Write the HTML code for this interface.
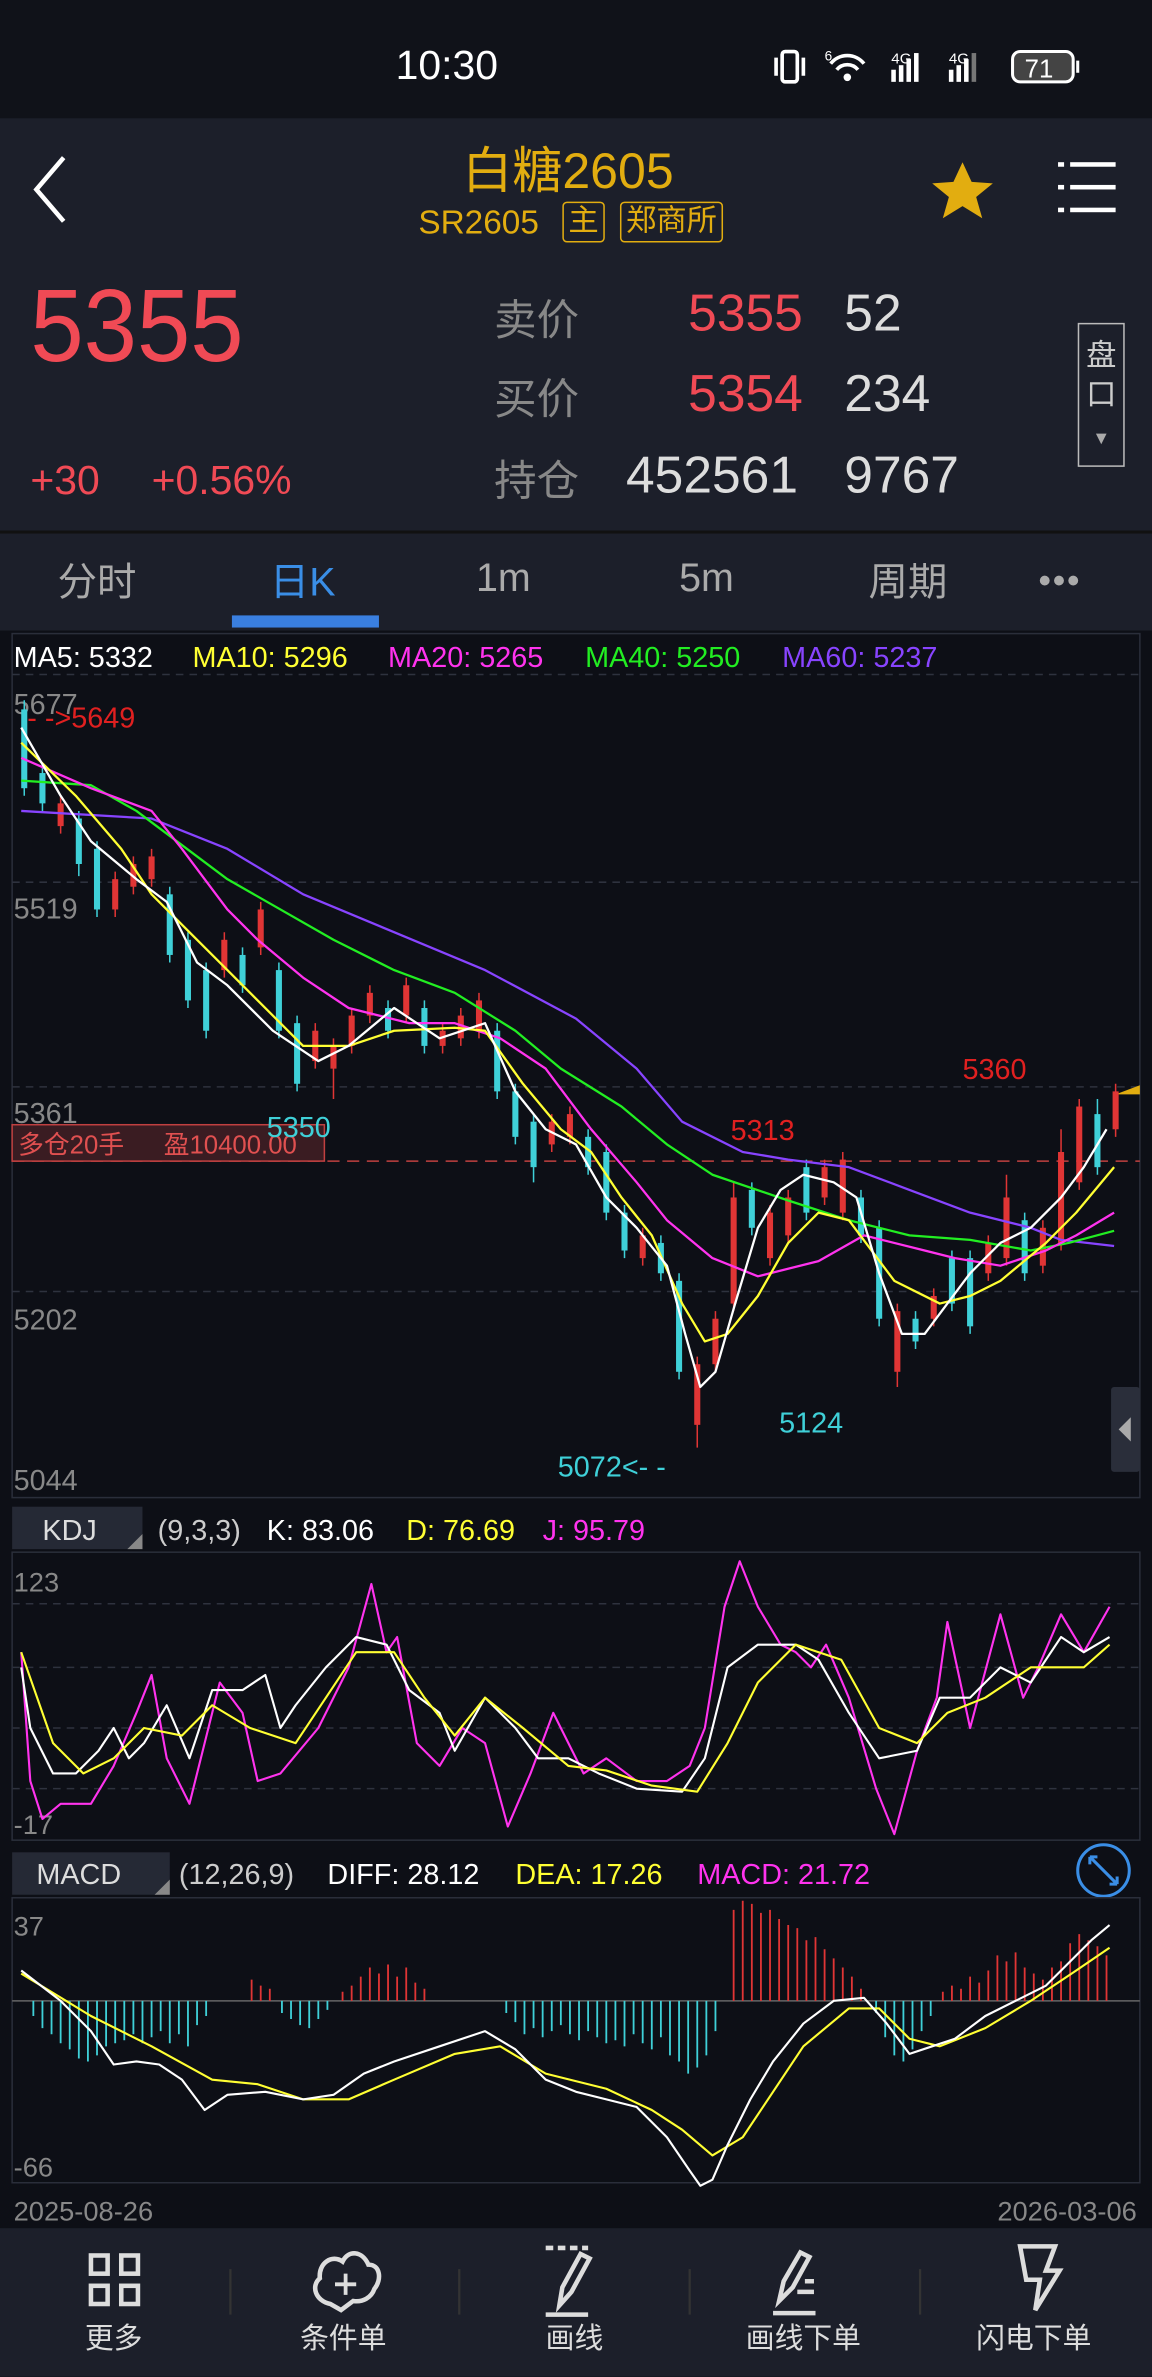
<!DOCTYPE html>
<html><head><meta charset="utf-8">
<style>
html,body{margin:0;padding:0;width:1152px;height:2376px;overflow:hidden;background:#0d0f16}
#w{position:absolute;left:0;top:0;width:760px;height:1568px;transform:scale(1.515789);transform-origin:0 0;font-family:"Liberation Sans","Noto Sans CJK SC",sans-serif;background:#0d0f16;overflow:hidden}
.a{position:absolute;white-space:nowrap}
</style></head><body><div id="w">
<!-- status bar -->
<div class="a" style="left:0;top:0;width:760px;height:78px;background:#101219"></div>
<div class="a" style="left:261px;top:28px;font-size:27px;color:#fff">10:30</div>
<svg class="a" style="left:510px;top:30px" width="210" height="30" viewBox="0 0 210 30">
<g fill="none" stroke="#fff" stroke-width="2.4">
<rect x="6" y="4" width="10" height="20" rx="2"/><path d="M2 8v12M20 8v12"/>
<path d="M38 12a14 14 0 0 1 22 0M42 16a9 9 0 0 1 14 0"/>
</g>
<circle cx="49" cy="21" r="2.5" fill="#fff"/>
<text x="34" y="10" font-size="9" fill="#fff">6</text>
<text x="78" y="12" font-size="10" fill="#fff">4G</text>
<g fill="#fff"><rect x="78" y="16" width="3" height="8"/><rect x="83" y="13" width="3" height="11"/><rect x="88" y="9" width="3" height="15"/><rect x="93" y="5" width="3" height="19"/></g>
<text x="116" y="12" font-size="10" fill="#fff">4G</text>
<g fill="#fff"><rect x="116" y="16" width="3" height="8"/><rect x="121" y="13" width="3" height="11"/><rect x="126" y="9" width="3" height="15"/></g><rect x="131" y="5" width="3" height="19" fill="#777"/>
<rect x="158" y="4" width="40" height="20" rx="5" fill="#444" stroke="#fff" stroke-width="2"/>
<rect x="200" y="10" width="2" height="8" fill="#fff"/>
<text x="166" y="21" font-size="17" fill="#fff">71</text>
</svg>
<!-- header -->
<div class="a" style="left:0;top:78px;width:760px;height:272px;background:#1c1f2a"></div>
<svg class="a" style="left:18px;top:100px" width="30" height="50"><path d="M24 4L6 25l18 21" fill="none" stroke="#fff" stroke-width="3"/></svg>
<div class="a" style="left:305px;top:86px;font-size:33px;color:#e2ad10">白糖2605</div>
<div class="a" style="left:276px;top:134px;font-size:22px;color:#e2ad10">SR2605</div>
<div class="a" style="left:371px;top:133px;font-size:20px;color:#e2ad10;border:1.5px solid #e2ad10;border-radius:3px;padding:0 3px;line-height:25px">主</div>
<div class="a" style="left:409px;top:133px;font-size:20px;color:#e2ad10;border:1.5px solid #e2ad10;border-radius:3px;padding:0 3px;line-height:25px">郑商所</div>
<svg class="a" style="left:612px;top:104px" width="46" height="42"><path d="M23 3l6 13 14 1-11 9 4 14-13-8-13 8 4-14-11-9 14-1z" fill="#e2ad10"/></svg>
<svg class="a" style="left:698px;top:104px" width="42" height="40" fill="#fff"><rect x="0" y="3" width="4" height="3"/><rect x="8" y="3" width="30" height="3"/><rect x="0" y="18" width="4" height="3"/><rect x="8" y="18" width="30" height="3"/><rect x="0" y="33" width="4" height="3"/><rect x="8" y="33" width="30" height="3"/></svg>
<div class="a" style="left:20px;top:176px;font-size:68px;color:#f04a55;transform:scaleX(0.93);transform-origin:0 0">5355</div>
<div class="a" style="left:20px;top:302px;font-size:27px;color:#f04a55">+30</div>
<div class="a" style="left:100px;top:302px;font-size:27px;color:#f04a55">+0.56%</div>
<div class="a" style="left:326px;top:190px;font-size:28px;color:#888">卖价</div>
<div class="a" style="left:326px;top:242px;font-size:28px;color:#888">买价</div>
<div class="a" style="left:326px;top:296px;font-size:28px;color:#888">持仓</div>
<div class="a" style="left:454px;top:188px;font-size:34px;color:#f04a55">5355</div>
<div class="a" style="left:557px;top:188px;font-size:34px;color:#ddd">52</div>
<div class="a" style="left:454px;top:241px;font-size:34px;color:#f04a55">5354</div>
<div class="a" style="left:557px;top:241px;font-size:34px;color:#ddd">234</div>
<div class="a" style="left:413px;top:295px;font-size:34px;color:#ddd">452561</div>
<div class="a" style="left:557px;top:295px;font-size:34px;color:#ddd">9767</div>
<div class="a" style="left:711px;top:213px;width:31px;height:95px;border:1.5px solid #bbb;box-sizing:border-box;color:#ccc;font-size:20px;text-align:center;line-height:26px;padding-top:8px">盘<br>口<br><span style="font-size:12px;color:#aaa">▼</span></div>
<!-- tabs -->
<div class="a" style="left:0;top:350px;width:760px;height:64px;background:#1c1f2a;border-top:2px solid #111"></div>
<div class="a" style="left:38px;top:364px;font-size:26px;color:#aaa">分时</div>
<div class="a" style="left:178px;top:364px;font-size:26px;color:#3a8ee6">日K</div>
<div class="a" style="left:153px;top:406px;width:97px;height:8px;background:#3a7fe0"></div>
<div class="a" style="left:314px;top:366px;font-size:26px;color:#aaa">1m</div>
<div class="a" style="left:448px;top:366px;font-size:26px;color:#aaa">5m</div>
<div class="a" style="left:573px;top:364px;font-size:26px;color:#aaa">周期</div>
<div class="a" style="left:685px;top:370px;font-size:24px;color:#aaa;letter-spacing:1px">•••</div>
<!-- charts -->
<svg class="a" style="left:0;top:414px" width="760" height="1056" viewBox="0 414 760 1056" font-family="Liberation Sans, Noto Sans CJK SC, sans-serif">
<rect x="8" y="418" width="744" height="570" fill="none" stroke="#2a2e3a"/>
<g stroke="#2e323e" stroke-dasharray="5 4"><path d="M8 445H752M8 582H752M8 717H752M8 852H752"/></g>
<g stroke="#2e323e" stroke-dasharray="5 4"><path d="M8 1058H752M8 1100H752M8 1140H752M8 1180H752"/></g>
<text x="9" y="440" font-size="19" fill="#fff">MA5: 5332</text>
<text x="127" y="440" font-size="19" fill="#ffff33">MA10: 5296</text>
<text x="256" y="440" font-size="19" fill="#ff33ee">MA20: 5265</text>
<text x="386" y="440" font-size="19" fill="#22ee22">MA40: 5250</text>
<text x="516" y="440" font-size="19" fill="#8844ff">MA60: 5237</text>
<g font-size="19" fill="#888"><text x="9" y="471">5677</text><text x="9" y="606">5519</text><text x="9" y="741">5361</text><text x="9" y="877">5202</text><text x="9" y="983">5044</text></g>
<text x="18" y="480" font-size="19" fill="#e02020">- ->5649</text>
<text x="482" y="752" font-size="19" fill="#e02020">5313</text>
<text x="635" y="712" font-size="19" fill="#e02020">5360</text>
<text x="514" y="945" font-size="19" fill="#3fd0d8">5124</text>
<text x="368" y="974" font-size="19" fill="#3fd0d8">5072&lt;- -</text>
<path d="M8 766H752" stroke="#c04040" stroke-dasharray="8 5"/>
<rect x="8" y="742" width="206" height="24" fill="#3a1c22" stroke="#c04040"/>
<text x="12" y="761" font-size="17" fill="#e05050">多仓20手</text><text x="108" y="761" font-size="17" fill="#e05050">盈10400.00</text>
<text x="176" y="750" font-size="19" fill="#3fd0d8">5350</text>
<path d="M752 722l-16 0l16-6z" fill="#e2ad10"/>
<!-- candles -->
<g stroke="#3fd0d8" stroke-width="1">
<path d="M16 462V525M28 505V535M52 535V578M64 555V605M112 585V635M124 615V665M136 635V685M160 625V655M184 635V685M196 670V720M256 660V685M280 660V695M328 675V725M340 715V755M352 735V780M388 745V775M400 755V805M412 795V830M436 815V845M448 840V910M496 780V815M532 765V805M568 785V820M580 805V875M604 865V890M628 825V865M640 825V880M676 800V845M724 725V775"/></g>
<g fill="#3fd0d8">
<rect x="14" y="468" width="4" height="52"/><rect x="26" y="510" width="4" height="20"/><rect x="50" y="540" width="4" height="30"/><rect x="62" y="560" width="4" height="40"/><rect x="110" y="590" width="4" height="40"/><rect x="122" y="620" width="4" height="40"/><rect x="134" y="640" width="4" height="40"/><rect x="158" y="630" width="4" height="20"/><rect x="182" y="640" width="4" height="40"/><rect x="194" y="675" width="4" height="40"/><rect x="254" y="665" width="4" height="15"/><rect x="278" y="665" width="4" height="25"/><rect x="326" y="680" width="4" height="40"/><rect x="338" y="720" width="4" height="30"/><rect x="350" y="740" width="4" height="30"/><rect x="386" y="750" width="4" height="20"/><rect x="398" y="760" width="4" height="40"/><rect x="410" y="800" width="4" height="25"/><rect x="434" y="820" width="4" height="20"/><rect x="446" y="845" width="4" height="60"/><rect x="494" y="785" width="4" height="25"/><rect x="530" y="770" width="4" height="30"/><rect x="566" y="790" width="4" height="25"/><rect x="578" y="810" width="4" height="60"/><rect x="602" y="870" width="4" height="15"/><rect x="626" y="830" width="4" height="30"/><rect x="638" y="830" width="4" height="45"/><rect x="674" y="805" width="4" height="35"/><rect x="722" y="735" width="4" height="35"/></g>
<g stroke="#e03535" stroke-width="1">
<path d="M40 525V550M76 575V605M88 565V590M100 560V585M148 615V645M172 595V630M208 675V705M220 685V725M232 665V695M244 650V675M268 645V675M292 675V695M304 665V690M316 655V685M364 735V760M376 730V755M424 810V835M460 895V955M472 865V905M484 780V865M508 795V835M520 785V820M544 765V795M556 760V805M592 860V915M616 850V875M652 815V845M664 775V835M688 805V840M700 745V825M712 725V785M736 715V750"/></g>
<g fill="#e03535">
<rect x="38" y="530" width="4" height="15"/><rect x="74" y="580" width="4" height="20"/><rect x="86" y="570" width="4" height="15"/><rect x="98" y="565" width="4" height="15"/><rect x="146" y="620" width="4" height="20"/><rect x="170" y="600" width="4" height="25"/><rect x="206" y="680" width="4" height="20"/><rect x="218" y="690" width="4" height="15"/><rect x="230" y="670" width="4" height="20"/><rect x="242" y="655" width="4" height="15"/><rect x="266" y="650" width="4" height="20"/><rect x="290" y="680" width="4" height="10"/><rect x="302" y="670" width="4" height="15"/><rect x="314" y="660" width="4" height="20"/><rect x="362" y="740" width="4" height="15"/><rect x="374" y="735" width="4" height="15"/><rect x="422" y="815" width="4" height="15"/><rect x="458" y="900" width="4" height="40"/><rect x="470" y="870" width="4" height="30"/><rect x="482" y="790" width="4" height="70"/><rect x="506" y="800" width="4" height="30"/><rect x="518" y="790" width="4" height="25"/><rect x="542" y="770" width="4" height="20"/><rect x="554" y="765" width="4" height="35"/><rect x="590" y="865" width="4" height="40"/><rect x="614" y="855" width="4" height="15"/><rect x="650" y="820" width="4" height="20"/><rect x="662" y="790" width="4" height="40"/><rect x="686" y="810" width="4" height="25"/><rect x="698" y="760" width="4" height="60"/><rect x="710" y="730" width="4" height="50"/><rect x="734" y="720" width="4" height="25"/></g>
<!-- MAs -->
<g fill="none" stroke-width="1.5" stroke-linejoin="round">
<polyline stroke="#8844ff" points="14,535 100,540 150,560 200,590 260,615 320,640 380,672 420,705 450,740 490,760 520,765 560,770 600,785 640,800 680,810 700,818 735,822"/>
<polyline stroke="#22ee22" points="14,515 60,518 90,535 150,580 220,620 260,640 300,655 340,680 370,705 410,730 440,755 470,775 520,792 560,805 600,815 640,818 680,825 705,820 735,812"/>
<polyline stroke="#ff33ee" points="14,500 60,520 100,535 120,560 150,600 170,620 200,645 230,665 270,675 300,675 330,685 360,705 390,745 420,780 440,805 470,830 500,842 540,832 570,815 610,825 630,830 660,835 690,825 710,815 735,800"/>
<polyline stroke="#ffff33" points="14,490 50,525 80,560 100,590 130,620 150,640 170,660 200,690 230,690 260,680 300,678 320,680 345,715 370,745 390,760 410,790 430,815 450,860 465,885 480,880 500,855 520,820 540,800 560,805 590,845 620,860 640,855 660,845 690,820 710,800 735,770"/>
<polyline stroke="#ffffff" points="14,480 40,525 60,555 90,580 110,595 130,635 150,650 180,680 210,700 230,690 260,665 290,685 320,675 340,720 360,745 380,755 400,790 420,810 440,835 452,880 462,915 472,905 485,860 500,810 515,785 530,775 550,780 565,790 580,840 595,880 610,880 625,860 640,840 660,820 680,810 700,790 715,770 730,745"/>
</g>
<!-- KDJ -->
<rect x="8" y="994" width="86" height="28" fill="#252935"/>
<path d="M94 1022v-10l-10 10z" fill="#888"/>
<text x="28" y="1016" font-size="19" fill="#ddd">KDJ</text>
<text x="104" y="1016" font-size="19" fill="#ccc">(9,3,3)</text>
<text x="176" y="1016" font-size="19" fill="#fff">K: 83.06</text>
<text x="268" y="1016" font-size="19" fill="#ffff33">D: 76.69</text>
<text x="358" y="1016" font-size="19" fill="#ff33ee">J: 95.79</text>
<rect x="8" y="1024" width="744" height="190" fill="none" stroke="#2a2e3a"/>
<text x="9" y="1050" font-size="18" fill="#888">123</text>
<text x="9" y="1210" font-size="18" fill="#888">-17</text>
<g fill="none" stroke-width="1.4" stroke-linejoin="round">
<polyline stroke="#ff33ee" points="14,1090 20,1175 28,1200 40,1190 60,1190 75,1165 90,1130 100,1105 110,1160 125,1190 135,1150 145,1110 160,1130 170,1175 185,1170 210,1140 230,1100 245,1045 255,1090 262,1080 275,1150 290,1165 305,1140 320,1150 335,1205 350,1170 365,1130 385,1170 400,1160 420,1175 440,1175 455,1165 465,1140 478,1060 488,1030 500,1060 515,1085 525,1090 535,1100 545,1085 560,1120 578,1180 590,1210 605,1155 618,1120 625,1070 640,1140 660,1065 675,1120 685,1100 700,1065 715,1090 732,1060"/>
<polyline stroke="#ffffff" points="14,1100 20,1140 35,1170 50,1170 65,1155 75,1140 85,1160 95,1150 110,1125 125,1160 140,1115 160,1115 175,1105 185,1140 195,1125 215,1100 235,1080 255,1085 270,1115 290,1130 300,1155 320,1120 340,1140 355,1160 375,1160 395,1170 420,1180 450,1182 465,1160 480,1100 500,1085 525,1085 540,1095 560,1130 580,1160 605,1155 620,1120 640,1120 660,1100 680,1110 700,1080 715,1090 732,1080"/>
<polyline stroke="#ffff33" points="14,1090 35,1150 55,1170 75,1160 95,1140 120,1145 140,1125 165,1140 195,1150 215,1120 235,1090 260,1090 280,1120 300,1145 320,1120 345,1140 375,1165 400,1168 430,1178 460,1182 480,1150 500,1110 525,1085 555,1095 580,1140 605,1150 625,1130 650,1120 680,1100 715,1100 732,1085"/>
</g>
<!-- MACD -->
<rect x="8" y="1222" width="104" height="28" fill="#252935"/>
<path d="M112 1250v-10l-10 10z" fill="#888"/>
<text x="24" y="1243" font-size="19" fill="#ddd">MACD</text>
<text x="118" y="1243" font-size="19" fill="#ccc">(12,26,9)</text>
<text x="216" y="1243" font-size="19" fill="#fff">DIFF: 28.12</text>
<text x="340" y="1243" font-size="19" fill="#ffff33">DEA: 17.26</text>
<text x="460" y="1243" font-size="19" fill="#ff33ee">MACD: 21.72</text>
<circle cx="728" cy="1234" r="17" fill="none" stroke="#3a8ee6" stroke-width="2"/>
<path d="M719 1225l18 18M719 1225h5M719 1225v5M737 1243h-5M737 1243v-5" stroke="#3a8ee6" stroke-width="2" fill="none"/>
<rect x="8" y="1252" width="744" height="188" fill="none" stroke="#2a2e3a"/>
<text x="9" y="1277" font-size="18" fill="#888">37</text>
<text x="9" y="1436" font-size="18" fill="#888">-66</text>
<path d="M8 1320H752" stroke="#666"/>
<g stroke="#3fd0d8" stroke-width="1.2">
<path d="M22 1320v10M28 1320v18M34 1320v22M40 1320v28M46 1320v32M52 1320v38M58 1320v40M64 1320v36M70 1320v30M76 1320v28M82 1320v26M88 1320v22M94 1320v28M100 1320v24M106 1320v20M112 1320v28M118 1320v22M124 1320v30M130 1320v16M136 1320v10M186 1320v8M192 1320v12M198 1320v16M204 1320v18M210 1320v12M216 1320v6M334 1320v8M340 1320v14M346 1320v22M352 1320v18M358 1320v24M364 1320v20M370 1320v16M376 1320v22M382 1320v26M388 1320v20M394 1320v24M400 1320v28M406 1320v26M412 1320v30M418 1320v22M424 1320v28M430 1320v32M436 1320v24M442 1320v36M448 1320v40M454 1320v48M460 1320v44M466 1320v36M472 1320v20M578 1320v8M584 1320v24M590 1320v36M596 1320v40M602 1320v32M608 1320v20M614 1320v10"/></g>
<g stroke="#e03535" stroke-width="1.2">
<path d="M166 1320v-14M172 1320v-10M178 1320v-8M226 1320v-6M232 1320v-10M238 1320v-16M244 1320v-22M250 1320v-18M256 1320v-24M262 1320v-16M268 1320v-22M274 1320v-12M280 1320v-8M484 1320v-60M490 1320v-66M496 1320v-64M502 1320v-58M508 1320v-60M514 1320v-54M520 1320v-50M526 1320v-48M532 1320v-40M538 1320v-42M544 1320v-34M550 1320v-28M556 1320v-22M562 1320v-16M568 1320v-8M622 1320v-6M628 1320v-10M634 1320v-8M640 1320v-16M646 1320v-12M652 1320v-20M658 1320v-30M664 1320v-26M670 1320v-32M676 1320v-22M682 1320v-18M688 1320v-14M694 1320v-22M700 1320v-26M706 1320v-38M712 1320v-44M718 1320v-40M724 1320v-36M730 1320v-30"/></g>
<g fill="none" stroke-width="1.4" stroke-linejoin="round">
<polyline stroke="#ffff33" points="14,1302 60,1330 100,1350 140,1372 170,1375 200,1385 230,1385 260,1372 300,1355 330,1350 360,1368 400,1378 430,1392 450,1405 470,1422 490,1410 510,1380 530,1350 560,1325 580,1325 600,1345 620,1350 650,1338 680,1320 710,1300 732,1285"/>
<polyline stroke="#ffffff" points="14,1300 40,1320 60,1340 75,1362 90,1360 105,1362 120,1372 135,1392 150,1382 175,1380 200,1385 220,1382 240,1368 260,1360 290,1350 320,1340 340,1352 360,1372 380,1380 400,1385 420,1390 440,1410 455,1432 462,1442 470,1438 480,1415 495,1385 510,1360 530,1335 550,1320 570,1318 585,1335 600,1355 615,1350 630,1345 650,1330 670,1320 690,1310 705,1295 720,1280 732,1270"/>
</g>
<text x="9" y="1465" font-size="18" fill="#888">2025-08-26</text>
<text x="750" y="1465" font-size="18" fill="#888" text-anchor="end">2026-03-06</text>
<rect x="733" y="915" width="19" height="56" rx="2" fill="#2a2e3a"/>
<path d="M746 935v16l-8-8z" fill="#aaa"/>
</svg>
<!-- bottom bar -->
<div class="a" style="left:0;top:1470px;width:760px;height:98px;background:#1c1f2a"></div>
<svg class="a" style="left:0;top:1470px" width="760" height="98" fill="none" stroke="#ddd" stroke-width="3">
<rect x="60" y="18" width="11" height="12"/><rect x="80" y="18" width="11" height="12"/><rect x="60" y="38" width="11" height="12"/><rect x="80" y="38" width="11" height="12"/>
<path d="M218 50c-10-2-13-12-7-17-1-10 8-16 15-11 4-8 13-7 17 2 8 0 9 10 4 16-2 6-8 9-14 8l-8 6z"/><path d="M228 30v14M221 37h14" stroke-width="2.5"/>
<path d="M360 13h28" stroke-dasharray="5 3"/><path d="M369 51l2-12 12-22 6 3-12 22z"/><path d="M360 57h28"/>
<path d="M514 48l3-13 11-19 6 3-11 20zM526 42h11M531 35h6M510 56h28"/>
<path d="M673 12h23l-6 16h9l-16 26 3-20h-9z"/>
<path d="M152 27v30M303 27v30M455 27v30M607 27v30" stroke="#333" stroke-width="1.5"/>
</svg>
<div class="a" style="left:56px;top:1528px;font-size:19px;color:#ddd">更多</div>
<div class="a" style="left:198px;top:1528px;font-size:19px;color:#ddd">条件单</div>
<div class="a" style="left:360px;top:1528px;font-size:19px;color:#ddd">画线</div>
<div class="a" style="left:492px;top:1528px;font-size:19px;color:#ddd">画线下单</div>
<div class="a" style="left:644px;top:1528px;font-size:19px;color:#ddd">闪电下单</div>
</div></body></html>
